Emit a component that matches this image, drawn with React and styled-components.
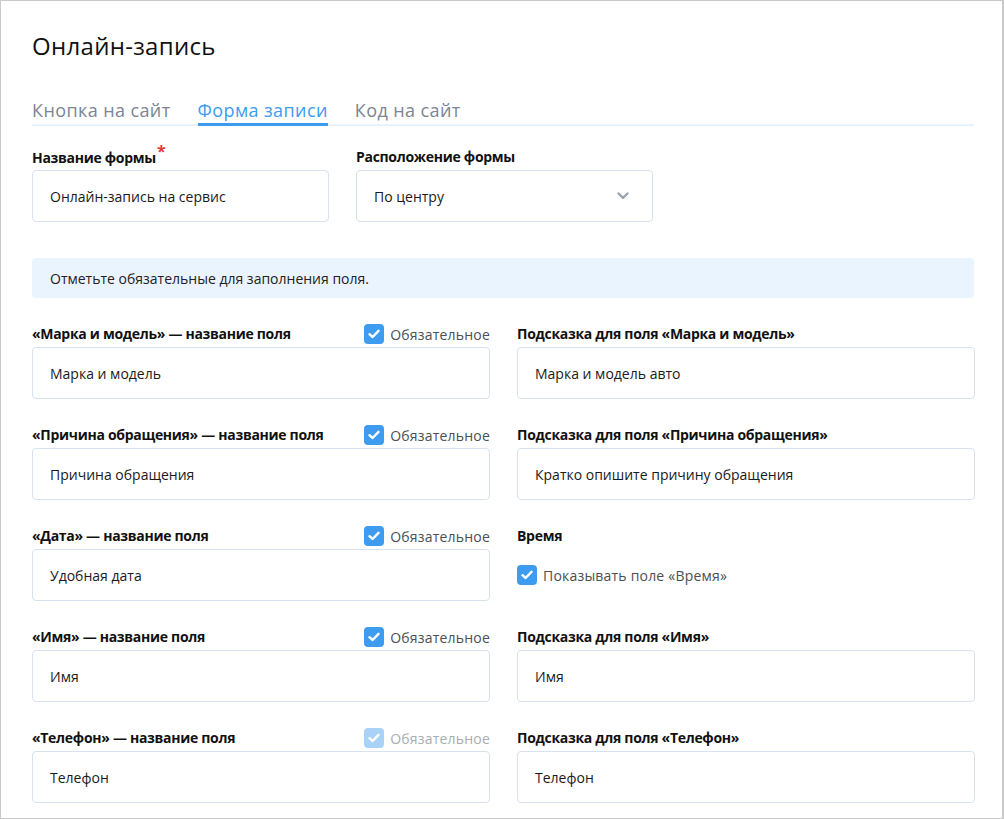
import React from 'react';
import styled, { createGlobalStyle } from 'styled-components';

const GlobalStyle = createGlobalStyle`
  html, body {
    margin: 0;
    padding: 0;
    background: #fff;
  }
  body {
    font-family: 'Open Sans', 'Noto Sans', sans-serif;
    color: #1a1a1a;
  }
`;

const Frame = styled.div`
  width: 1004px;
  height: 819px;
  box-sizing: border-box;
  border: 1px solid #c9c9c9;
  border-right-width: 2px;
  padding: 31px 28px 0 31px;
  overflow: hidden;
`;

const Title = styled.h1`
  margin: 0;
  font-size: 24px;
  line-height: 28px;
  font-weight: 400;
  letter-spacing: 0.3px;
  color: #111;
`;

const Tabs = styled.div`
  display: flex;
  gap: 27px;
  margin-top: 38px;
  border-bottom: 2px solid #e8f2fc;
`;

const Tab = styled.div`
  font-size: 18px;
  line-height: 24px;
  letter-spacing: 0.4px;
  padding-bottom: 1px;
  margin-bottom: -2px;
  color: ${p => (p.$active ? '#3d9bf0' : '#7c8591')};
  border-bottom: 3px solid ${p => (p.$active ? '#3d9bf0' : 'transparent')};
`;

const TopRow = styled.div`
  display: flex;
  gap: 27px;
  margin-top: 21px;
`;

const Field = styled.div`
  display: flex;
  flex-direction: column;
  width: ${p => p.$width || '458px'};
`;

const LabelRow = styled.div`
  display: flex;
  align-items: center;
  justify-content: space-between;
  height: 20px;
  margin-bottom: 3px;
`;

const Label = styled.div`
  font-size: 14px;
  font-weight: 700;
  line-height: 20px;
  color: #111;
  letter-spacing: -0.3px;
`;

const Star = styled.span`
  color: #e53935;
  font-size: 16px;
  position: relative;
  top: -6px;
  margin-left: 1px;
`;

const Input = styled.div`
  height: 52px;
  box-sizing: border-box;
  border: 1px solid #d6e2ef;
  border-radius: 4px;
  padding: 0 17px;
  display: flex;
  align-items: center;
  justify-content: space-between;
  font-size: 14px;
  color: #1a1a1a;
`;

const Chevron = styled.svg`
  width: 12px;
  height: 8px;
  margin-right: 6px;
`;

const Info = styled.div`
  margin-top: 36px;
  height: 40px;
  box-sizing: border-box;
  background: #eaf4fe;
  border-radius: 4px;
  padding: 0 18px;
  display: flex;
  align-items: center;
  font-size: 14px;
  color: #222;
`;

const Grid = styled.div`
  display: grid;
  grid-template-columns: 458px 458px;
  column-gap: 27px;
  row-gap: 26px;
  margin-top: 26px;
`;

const CheckLabel = styled.label`
  display: flex;
  align-items: center;
  gap: 6px;
  font-size: 14px;
  letter-spacing: 0.2px;
  color: ${p => (p.$disabled ? '#a9adb2' : '#4a4f55')};
`;

const Box = styled.span`
  width: 20px;
  height: 20px;
  border-radius: 4px;
  background: ${p => (p.$disabled ? '#a9d2f8' : '#3d9bf0')};
  display: flex;
  align-items: center;
  justify-content: center;
`;

const TimeBody = styled.div`
  height: 52px;
  display: flex;
  align-items: center;
`;

const Check = ({ disabled, children }) => (
  <CheckLabel $disabled={disabled}>
    <Box $disabled={disabled}>
      <svg width="12" height="10" viewBox="0 0 12 10">
        <path d="M1.5 5.2 L4.6 8 L10.5 1.8" fill="none" stroke="#fff" strokeWidth="2.4" strokeLinecap="round" strokeLinejoin="round" />
      </svg>
    </Box>
    {children}
  </CheckLabel>
);

const rows = [
  { name: '«Марка и модель» — название поля', value: 'Марка и модель', hint: 'Подсказка для поля «Марка и модель»', hintValue: 'Марка и модель авто' },
  { name: '«Причина обращения» — название поля', value: 'Причина обращения', hint: 'Подсказка для поля «Причина обращения»', hintValue: 'Кратко опишите причину обращения' },
  { name: '«Дата» — название поля', value: 'Удобная дата', time: true },
  { name: '«Имя» — название поля', value: 'Имя', hint: 'Подсказка для поля «Имя»', hintValue: 'Имя' },
  { name: '«Телефон» — название поля', value: 'Телефон', hint: 'Подсказка для поля «Телефон»', hintValue: 'Телефон', locked: true },
];

const App = () => {
  return (
    <Frame>
      <GlobalStyle />
      <Title>Онлайн-запись</Title>
      <Tabs>
        <Tab>Кнопка на сайт</Tab>
        <Tab $active>Форма записи</Tab>
        <Tab>Код на сайт</Tab>
      </Tabs>

      <TopRow>
        <Field $width="297px">
          <LabelRow>
            <Label>Название формы<Star>*</Star></Label>
          </LabelRow>
          <Input>Онлайн-запись на сервис</Input>
        </Field>
        <Field $width="297px">
          <LabelRow>
            <Label>Расположение формы</Label>
          </LabelRow>
          <Input>
            По центру
            <Chevron viewBox="0 0 12 8">
              <path d="M1.5 1.5 L6 5.8 L10.5 1.5" fill="none" stroke="#9aa3ad" strokeWidth="2.4" strokeLinecap="round" strokeLinejoin="round" />
            </Chevron>
          </Input>
        </Field>
      </TopRow>

      <Info>Отметьте обязательные для заполнения поля.</Info>

      <Grid>
        {rows.map((r, i) => (
          <React.Fragment key={i}>
            <Field>
              <LabelRow>
                <Label>{r.name}</Label>
                <Check disabled={r.locked}>Обязательное</Check>
              </LabelRow>
              <Input>{r.value}</Input>
            </Field>
            {r.time ? (
              <Field>
                <LabelRow>
                  <Label>Время</Label>
                </LabelRow>
                <TimeBody>
                  <Check>Показывать поле «Время»</Check>
                </TimeBody>
              </Field>
            ) : (
              <Field>
                <LabelRow>
                  <Label>{r.hint}</Label>
                </LabelRow>
                <Input>{r.hintValue}</Input>
              </Field>
            )}
          </React.Fragment>
        ))}
      </Grid>
    </Frame>
  );
};

export default App;
